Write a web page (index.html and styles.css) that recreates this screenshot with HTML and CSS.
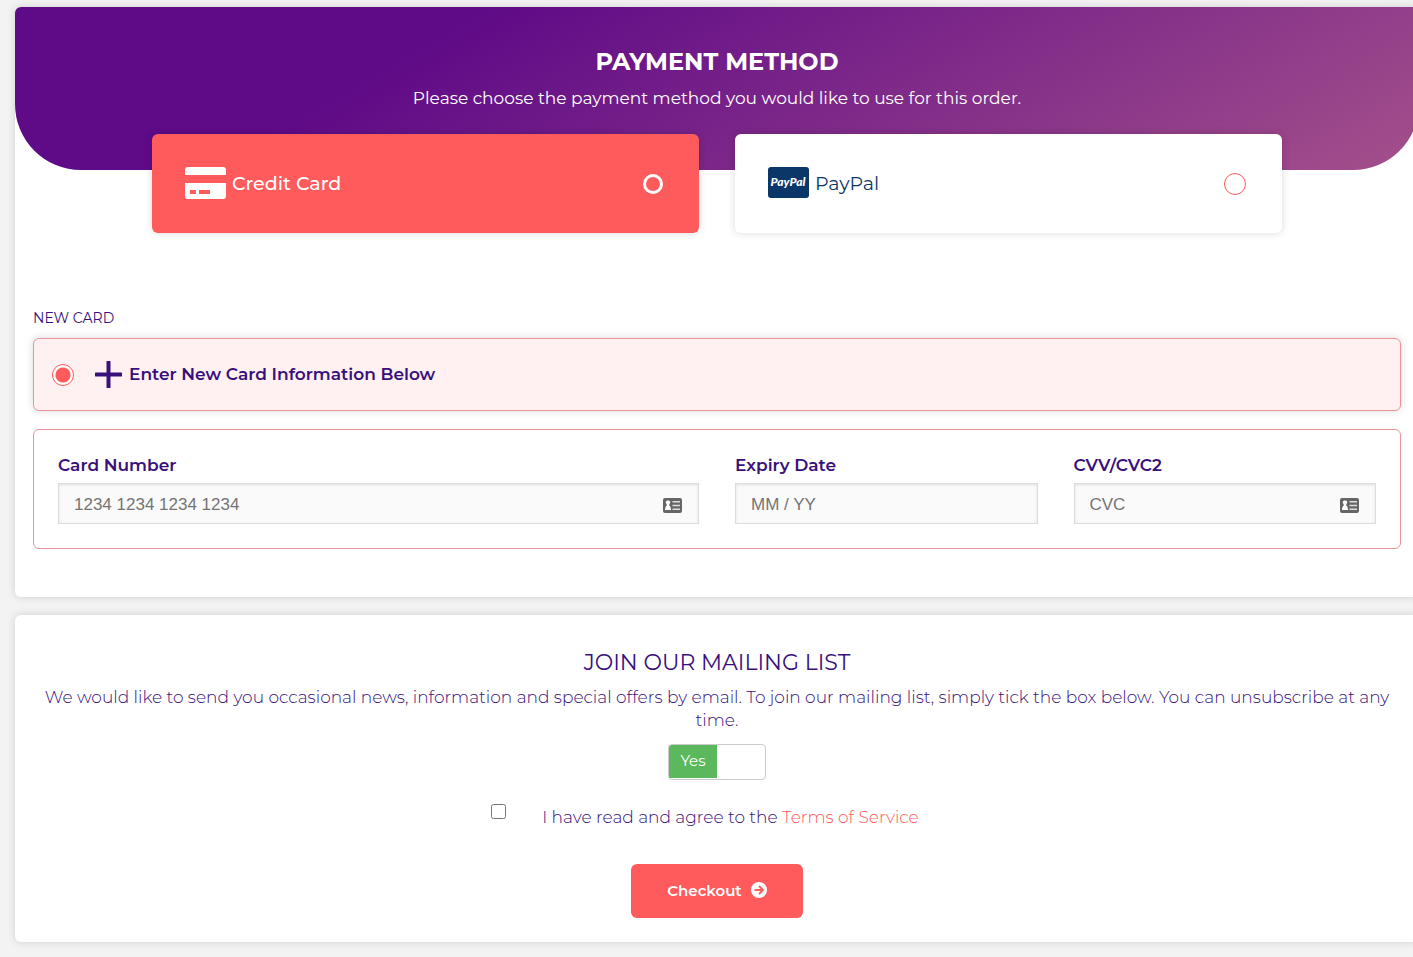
FILE: index.html
```html
<!DOCTYPE html>
<html lang="en">
<head>
    <meta charset="UTF-8">
    <meta name="viewport" content="width=device-width, initial-scale=1.0">
    <title>Checkout</title>
    <link rel="stylesheet" href="styles.css">
</head>
<body>
    <form class="checkout">
        <section class="panel payment">
            <header class="payment-header">
                <h1>PAYMENT METHOD</h1>
                <p>Please choose the payment method you would like to use for this order.</p>
            </header>

            <div class="methods">
                <label class="method method-active">
                    <svg class="method-icon" viewBox="0 0 41 34" aria-hidden="true">
                        <path fill="#fff" d="M3 0h35a3 3 0 0 1 3 3v5H0V3a3 3 0 0 1 3-3z"/>
                        <path fill="#fff" fill-rule="evenodd" d="M0 16h41v13a3 3 0 0 1-3 3H3a3 3 0 0 1-3-3zM5 23v4h6v-4zM14 23v4h11v-4z"/>
                    </svg>
                    <span>Credit Card</span>
                    <input type="radio" name="method" value="card">
                </label>
                <label class="method">
                    <svg class="method-icon" viewBox="0 0 41 34" aria-hidden="true">
                        <rect width="41" height="31" rx="3" fill="#0b3768"/>
                        <text class="paypal-mark" x="20" y="19" text-anchor="middle">PayPal</text>
                    </svg>
                    <span>PayPal</span>
                    <input type="radio" name="method" value="paypal">
                </label>
            </div>

            <div class="card-section">
                <h2 class="card-title">NEW CARD</h2>
                <label class="new-card">
                    <input type="radio" name="card" value="new" checked>
                    <svg class="plus" viewBox="0 0 27 27" aria-hidden="true">
                        <path d="M13.5 1v25M1 13.5h25" stroke="#38107c" stroke-width="4" stroke-linecap="round"/>
                    </svg>
                    <span>Enter New Card Information Below</span>
                </label>

                <div class="card-fields">
                    <div class="field field-wide">
                        <label for="cardNumber">Card Number</label>
                        <div class="input-wrap">
                            <input type="text" id="cardNumber" placeholder="1234 1234 1234 1234">
                            <svg class="id-icon" viewBox="0 0 19 15" aria-hidden="true">
                                <rect width="19" height="15" rx="2" fill="#666"/>
                                <path fill="#fff" d="M5 2.5a2 2 0 0 1 1.3 3.7v1.6c1 .6 1.7 2 1.7 4.2H2c0-2.2.7-3.6 1.7-4.2V6.2A2 2 0 0 1 5 2.5z"/>
                                <path fill="#ddd" d="M9.5 3H17v1.5H9.5zM9.5 6.7H17v1.5H9.5zM9.5 10.5H17V12H9.5z"/>
                            </svg>
                        </div>
                    </div>
                    <div class="field">
                        <label for="expiry">Expiry Date</label>
                        <div class="input-wrap">
                            <input type="text" id="expiry" placeholder="MM / YY">
                        </div>
                    </div>
                    <div class="field">
                        <label for="cvc">CVV/CVC2</label>
                        <div class="input-wrap">
                            <input type="text" id="cvc" placeholder="CVC">
                            <svg class="id-icon" viewBox="0 0 19 15" aria-hidden="true">
                                <rect width="19" height="15" rx="2" fill="#666"/>
                                <path fill="#fff" d="M5 2.5a2 2 0 0 1 1.3 3.7v1.6c1 .6 1.7 2 1.7 4.2H2c0-2.2.7-3.6 1.7-4.2V6.2A2 2 0 0 1 5 2.5z"/>
                                <path fill="#ddd" d="M9.5 3H17v1.5H9.5zM9.5 6.7H17v1.5H9.5zM9.5 10.5H17V12H9.5z"/>
                            </svg>
                        </div>
                    </div>
                </div>
            </div>
        </section>

        <section class="panel mailing">
            <h2 class="mailing-title">JOIN OUR MAILING LIST</h2>
            <p class="mailing-text">We would like to send you occasional news, information and special offers by email. To join our mailing list, simply tick the box below. You can unsubscribe at any time.</p>

            <label class="switch">
                <input type="checkbox" name="mailing" aria-label="Join our mailing list" checked>
                <span class="switch-on">Yes</span>
            </label>

            <div class="terms">
                <input type="checkbox" id="terms">
                <label for="terms">I have read and agree to the <a href="#">Terms of Service</a></label>
            </div>

            <button type="submit" class="checkout-btn">
                Checkout
                <svg viewBox="0 0 16 16" aria-hidden="true">
                    <circle cx="8" cy="8" r="8" fill="#fff"/>
                    <path d="M3.5 8h8M8 4l4 4-4 4" fill="none" stroke="#ff5a5c" stroke-width="1.8"/>
                </svg>
            </button>
        </section>
    </form>
</body>
</html>
```
FILE: styles.css
```css
* {
    box-sizing: border-box;
}

body {
    margin: 0;
    background-color: #f3f3f3;
    color: #38107c;
    font-family: Montserrat, Inter, sans-serif;
    font-size: 17px;
    line-height: 23px;
    overflow-x: hidden;
}

h1, h2, p {
    margin: 0;
}

/* the panels run off the right edge of the window */
.checkout {
    display: flex;
    flex-direction: column;
    gap: 18px;
    margin-right: -6px;
    padding: 7px 0 15px 15px;
}

.panel {
    background-color: white;
    border-radius: 6px;
    box-shadow: 0 0 8px rgba(0, 0, 0, 0.15);
}

.payment {
    padding-bottom: 48px;
}

.payment-header {
    height: 163px;
    padding-top: 41px;
    border-radius: 6px 6px 66px 66px;
    background: linear-gradient(150deg, #5f0a87 28%, #a4508b 100%);
    color: white;
    text-align: center;
}

.payment-header h1 {
    margin-bottom: 11px;
    font-size: 24px;
    line-height: 28px;
    font-weight: 700;
}

.methods {
    display: grid;
    grid-template-columns: 1fr 1fr;
    gap: 36px;
    margin-top: -36px;
    padding: 0 137px;
}

.method {
    display: flex;
    align-items: center;
    gap: 6px;
    height: 99px;
    padding: 0 36px 0 33px;
    border-radius: 6px;
    background-color: white;
    box-shadow: 0 0 8px rgba(0, 0, 0, 0.15);
    color: #0b3768;
    font-size: 19px;
}

.method-active {
    background-color: #ff5a5c;
    color: white;
    font-weight: 500;
}

.method-icon {
    width: 41px;
    height: 34px;
}

.paypal-mark {
    fill: white;
    font-family: Lato, sans-serif;
    font-size: 12px;
    font-style: italic;
    font-weight: 900;
}

input[type="radio"] {
    appearance: none;
    width: 22px;
    height: 22px;
    margin: 0;
    border: 1px solid #ff5a5c;
    border-radius: 50%;
    background-color: white;
}

.method input[type="radio"] {
    margin-left: auto;
}

.method-active input[type="radio"] {
    border: 3px solid white;
    background-color: #ff5a5c;
    width: 20px;
    height: 20px;
}

.card-section {
    padding: 74px 18px 0;
}

.card-title {
    margin-bottom: 8px;
    font-size: 14px;
    line-height: 23px;
    font-weight: 400;
}

.new-card {
    display: flex;
    align-items: center;
    height: 73px;
    margin-bottom: 18px;
    padding: 0 18px;
    border: 1px solid #e99497;
    border-radius: 6px;
    background-color: #fff1f1;
    box-shadow: 0 0 8px rgba(0, 0, 0, 0.15);
    font-weight: 600;
}

.new-card input[type="radio"]:checked {
    background: radial-gradient(circle, #ff5a5c 7px, white 8px);
}

.plus {
    width: 27px;
    height: 27px;
    margin: 0 7px 0 21px;
}

.card-fields {
    display: grid;
    grid-template-columns: repeat(4, 1fr);
    gap: 36px;
    padding: 24px;
    border: 1px solid #e99497;
    border-radius: 6px;
}

.field-wide {
    grid-column: span 2;
}

.field label {
    display: block;
    margin-bottom: 6px;
    font-weight: 600;
}

.input-wrap {
    position: relative;
}

.field input {
    display: block;
    width: 100%;
    height: 41px;
    padding: 2px 15px 0;
    border: 1px solid #ddd;
    background-color: #fafafa;
    box-shadow: inset 0 1px 3px rgba(0, 0, 0, 0.1);
    font-family: "Liberation Sans", Arial, sans-serif;
    font-size: 17px;
}

.field input::placeholder {
    color: #757575;
}

.id-icon {
    position: absolute;
    top: 15px;
    right: 17px;
    width: 19px;
    height: 15px;
}

.mailing {
    display: flex;
    flex-direction: column;
    align-items: center;
    padding: 34px 18px 24px;
    text-align: center;
}

.mailing-title {
    margin-bottom: 9px;
    font-size: 22px;
    line-height: 28px;
    font-weight: 400;
}

.mailing-text,
.terms {
    font-weight: 300;
}

.switch {
    display: flex;
    width: 98px;
    height: 36px;
    margin: 12px 0 24px;
    overflow: hidden;
    border: 1px solid #ccc;
    border-radius: 4px;
    background-color: white;
}

.switch input {
    appearance: none;
    width: 0;
    margin: 0;
}

.switch-on {
    width: 48px;
    height: 33px;
    background-color: #5cb85c;
    color: white;
    font-size: 15px;
    line-height: 32px;
    font-weight: 400;
}

.terms {
    display: flex;
    align-items: flex-start;
    gap: 36px;
    padding-right: 24px;
}

.terms input {
    width: 15px;
    height: 15px;
    margin: 0;
}

.terms label {
    padding-top: 2px;
}

.terms a {
    color: #ff5a5c;
    text-decoration: none;
}

.checkout-btn {
    display: flex;
    align-items: center;
    gap: 9px;
    height: 54px;
    margin-top: 35px;
    padding: 0 36px 2px;
    border: none;
    border-radius: 6px;
    background-color: #ff5a5c;
    color: white;
    font-family: inherit;
    font-size: 15px;
    font-weight: 600;
    cursor: pointer;
}

.checkout-btn svg {
    width: 16px;
    height: 16px;
}
```
